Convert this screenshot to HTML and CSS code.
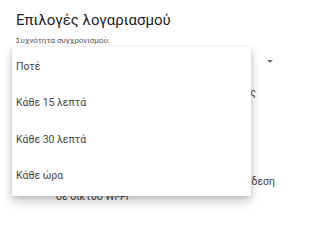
FILE: index.html
```html
<!DOCTYPE html>
<html lang="el">
<head>
<meta charset="utf-8">
<link rel="stylesheet" href="styles.css">
</head>
<body>
<div class="page">
  <h1 class="title">Επιλογές λογαριασμού</h1>
  <div class="label">Συχνότητα συγχρονισμού:</div>
  <div class="select">
    <span class="select-value">Κάθε 15 λεπτά</span>
    <span class="arrow"></span>
  </div>
  <div class="row row-one">
    <span class="row-text">Αποστολή μηνυμάτων από τον λογαριασμό ως</span>
  </div>
  <div class="row row-two">
    <span class="line-a">Συγχρονισμός μόνο όταν υπάρχει σύνδεση</span>
    <span class="line-b">σε δίκτυο Wi-Fi</span>
  </div>
</div>
<div class="menu">
  <div class="item">Ποτέ</div>
  <div class="item">Κάθε 15 λεπτά</div>
  <div class="item">Κάθε 30 λεπτά</div>
  <div class="item">Κάθε ώρα</div>
</div>
</body>
</html>
```
FILE: styles.css
```css
html, body {
  margin: 0;
  padding: 0;
  background: #ffffff;
}
body {
  font-family: Roboto, "Noto Sans", sans-serif;
  color: #333;
  width: 300px;
  height: 214px;
  overflow: hidden;
  position: relative;
}
.page {
  padding: 10px 0 0 16px;
}
.title {
  margin: 0;
  font-size: 15px;
  line-height: 20px;
  font-weight: 400;
  color: #222;
}
.label {
  margin-top: 6px;
  font-size: 8px;
  line-height: 10px;
  color: #555;
}
.select {
  display: flex;
  align-items: center;
  justify-content: space-between;
  height: 30px;
  padding-right: 27px;
  font-size: 10.5px;
  color: #444;
}
.arrow {
  width: 0;
  height: 0;
  border-left: 3.5px solid transparent;
  border-right: 3.5px solid transparent;
  border-top: 3.5px solid #707070;
}
.row {
  font-size: 10.5px;
  color: #444;
}
.row-one {
  display: flex;
  justify-content: flex-end;
  padding-right: 44px;
  margin-top: 10px;
  line-height: 14px;
  white-space: nowrap;
}
.row-two {
  margin-top: 74px;
  line-height: 15px;
}
.line-a {
  display: block;
  white-space: nowrap;
  text-align: right;
  padding-right: 25px;
}
.line-b {
  display: block;
  padding-left: 40px;
}
.menu {
  position: absolute;
  left: 12px;
  top: 47px;
  width: 239px;
  padding: 1px 0 2px;
  background: #fff;
  box-shadow: 0 5px 10px rgba(0,0,0,0.22), 0 1px 4px rgba(0,0,0,0.12);
}
.item {
  height: 36.5px;
  display: flex;
  align-items: center;
  padding-left: 4px;
  font-size: 10.5px;
  color: #444;
}
```
